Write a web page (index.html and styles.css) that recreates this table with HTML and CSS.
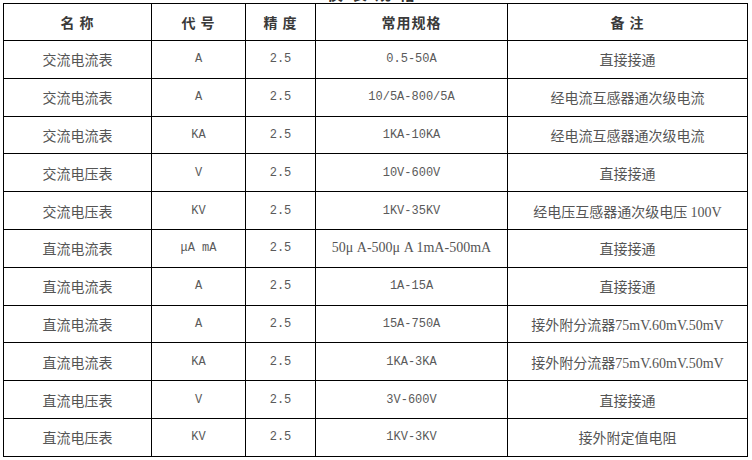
FILE: index.html
```html
<!DOCTYPE html>
<html lang="zh">
<head>
<meta charset="utf-8">
<title>常用仪表规格</title>
<link rel="stylesheet" href="styles.css">
</head>
<body>
<h2 class="title">仪表规格</h2>
<table class="spec">
  <colgroup>
    <col class="c1"><col class="c2"><col class="c3"><col class="c4"><col class="c5">
  </colgroup>
  <thead>
    <tr><th>名 称</th><th>代 号</th><th>精 度</th><th>常用规格</th><th>备 注</th></tr>
  </thead>
  <tbody>
    <tr><td>交流电流表</td><td class="m">A</td><td class="m">2.5</td><td class="m">0.5-50A</td><td>直接接通</td></tr>
    <tr><td>交流电流表</td><td class="m">A</td><td class="m">2.5</td><td class="m">10/5A-800/5A</td><td>经电流互感器通次级电流</td></tr>
    <tr><td>交流电流表</td><td class="m">KA</td><td class="m">2.5</td><td class="m">1KA-10KA</td><td>经电流互感器通次级电流</td></tr>
    <tr><td>交流电压表</td><td class="m">V</td><td class="m">2.5</td><td class="m">10V-600V</td><td>直接接通</td></tr>
    <tr><td>交流电压表</td><td class="m">KV</td><td class="m">2.5</td><td class="m">1KV-35KV</td><td>经电压互感器通次级电压 <span class="s">100V</span></td></tr>
    <tr><td>直流电流表</td><td class="m">μA mA</td><td class="m">2.5</td><td class="s">50μ A-500μ A 1mA-500mA</td><td>直接接通</td></tr>
    <tr><td>直流电流表</td><td class="m">A</td><td class="m">2.5</td><td class="m">1A-15A</td><td>直接接通</td></tr>
    <tr><td>直流电流表</td><td class="m">A</td><td class="m">2.5</td><td class="m">15A-750A</td><td>接外附分流器<span class="s">75mV.60mV.50mV</span></td></tr>
    <tr><td>直流电流表</td><td class="m">KA</td><td class="m">2.5</td><td class="m">1KA-3KA</td><td>接外附分流器<span class="s">75mV.60mV.50mV</span></td></tr>
    <tr><td>直流电压表</td><td class="m">V</td><td class="m">2.5</td><td class="m">3V-600V</td><td>直接接通</td></tr>
    <tr><td>直流电压表</td><td class="m">KV</td><td class="m">2.5</td><td class="m">1KV-3KV</td><td>接外附定值电阻</td></tr>
  </tbody>
</table>
</body>
</html>
```
FILE: styles.css
```css
html, body {
  margin: 0;
  padding: 0;
  background: #fff;
}
body {
  font-family: "Noto Sans CJK SC", sans-serif;
  font-size: 14px;
  color: #555;
  padding: 0 0 0 3px;
}
.title {
  margin: -15px 0 0 0;
  height: 18px;
  line-height: 16px;
  font-size: 16px;
  font-weight: bold;
  text-align: center;
  width: 744px;
  color: #333;
  letter-spacing: 8px;
  overflow: hidden;
}
.spec {
  border-collapse: collapse;
  width: 744px;
  table-layout: fixed;
}
.c1 { width: 148px; }
.c2 { width: 94px; }
.c3 { width: 70px; }
.c4 { width: 192px; }
.c5 { width: 240px; }
.spec th, .spec td {
  border: 1px solid #000;
  text-align: center;
  vertical-align: middle;
  padding: 0;
  white-space: nowrap;
  overflow: hidden;
}
.spec th {
  height: 36px;
  font-weight: bold;
  font-size: 14px;
  color: #3a3a3a;
  letter-spacing: 1px;
}
.spec td {
  height: 36.8px;
  font-weight: normal;
  color: #555;
}
.spec td.m {
  font-family: "Liberation Mono", "DejaVu Sans Mono", monospace;
  font-size: 12px;
  color: #5a5a5a;
}
.s {
  font-family: "Liberation Serif", serif;
  font-size: 14px;
}
```
